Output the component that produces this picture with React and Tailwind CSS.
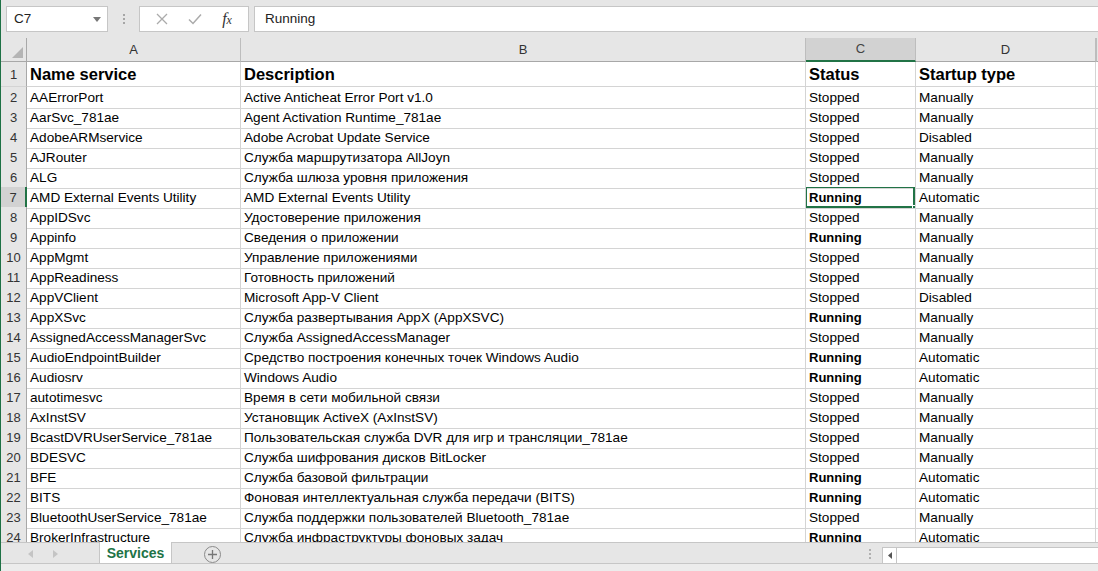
import React from 'react';

const rows = [
  ['AAErrorPort', 'Active Anticheat Error Port v1.0', 'Stopped', 'Manually'],
  ['AarSvc_781ae', 'Agent Activation Runtime_781ae', 'Stopped', 'Manually'],
  ['AdobeARMservice', 'Adobe Acrobat Update Service', 'Stopped', 'Disabled'],
  ['AJRouter', 'Служба маршрутизатора AllJoyn', 'Stopped', 'Manually'],
  ['ALG', 'Служба шлюза уровня приложения', 'Stopped', 'Manually'],
  ['AMD External Events Utility', 'AMD External Events Utility', 'Running', 'Automatic'],
  ['AppIDSvc', 'Удостоверение приложения', 'Stopped', 'Manually'],
  ['Appinfo', 'Сведения о приложении', 'Running', 'Manually'],
  ['AppMgmt', 'Управление приложениями', 'Stopped', 'Manually'],
  ['AppReadiness', 'Готовность приложений', 'Stopped', 'Manually'],
  ['AppVClient', 'Microsoft App-V Client', 'Stopped', 'Disabled'],
  ['AppXSvc', 'Служба развертывания AppX (AppXSVC)', 'Running', 'Manually'],
  ['AssignedAccessManagerSvc', 'Служба AssignedAccessManager', 'Stopped', 'Manually'],
  ['AudioEndpointBuilder', 'Средство построения конечных точек Windows Audio', 'Running', 'Automatic'],
  ['Audiosrv', 'Windows Audio', 'Running', 'Automatic'],
  ['autotimesvc', 'Время в сети мобильной связи', 'Stopped', 'Manually'],
  ['AxInstSV', 'Установщик ActiveX (AxInstSV)', 'Stopped', 'Manually'],
  ['BcastDVRUserService_781ae', 'Пользовательская служба DVR для игр и трансляции_781ae', 'Stopped', 'Manually'],
  ['BDESVC', 'Служба шифрования дисков BitLocker', 'Stopped', 'Manually'],
  ['BFE', 'Служба базовой фильтрации', 'Running', 'Automatic'],
  ['BITS', 'Фоновая интеллектуальная служба передачи (BITS)', 'Running', 'Automatic'],
  ['BluetoothUserService_781ae', 'Служба поддержки пользователей Bluetooth_781ae', 'Stopped', 'Manually'],
  ['BrokerInfrastructure', 'Служба инфраструктуры фоновых задач', 'Running', 'Automatic'],
];

const cols = 'grid grid-cols-[26px_214px_565px_110px_180px_1fr]';
const cell = 'border-r border-b border-[#d4d4d4] pl-[3px] pt-[1px] flex items-center whitespace-nowrap overflow-hidden';

function ColHeader({ label, active }) {
  return (
    <div
      className={`flex items-center justify-center border-r border-[#bdbdbd] text-[13px] ${
        active ? 'bg-[#d2d2d2] border-b-2 border-b-[#217346] text-[#444]' : 'border-b border-b-[#a8a8a8] text-[#333]'
      }`}
    >
      {label}
    </div>
  );
}

function RowNum({ n, active }) {
  return (
    <div
      className={`flex items-center justify-center pt-[1px] text-[13px] border-b border-[#d4d4d4] ${
        active ? 'bg-[#d2d2d2] border-r-2 border-r-[#217346] text-[#333]' : 'bg-[#e6e6e6] border-r border-r-[#a8a8a8] text-[#333]'
      }`}
    >
      {n}
    </div>
  );
}

export default function App() {
  return (
    <div
      className="w-[1098px] h-[571px] overflow-hidden flex flex-col bg-white border-l border-[#1e7145] text-black"
      style={{ fontFamily: '"Liberation Sans", Arial, sans-serif' }}
    >
      {/* Formula bar */}
      <div className="h-[38px] bg-[#e6e6e6] flex items-start pt-[6px] shrink-0">
        <div className="ml-[5px] w-[102px] h-[26px] bg-white border border-[#c6c6c6] flex items-center justify-between pl-[7px] pr-[6px] text-[13.5px] text-[#222]">
          <span>C7</span>
          <svg width="8" height="5" viewBox="0 0 8 5"><path d="M0 0h8L4 5z" fill="#777" /></svg>
        </div>
        <div className="w-[31px] h-[26px] flex flex-col items-center justify-center gap-[2px]">
          <span className="w-[2px] h-[2px] bg-[#a6a6a6]" />
          <span className="w-[2px] h-[2px] bg-[#a6a6a6]" />
          <span className="w-[2px] h-[2px] bg-[#a6a6a6]" />
        </div>
        <div className="w-[110px] h-[26px] bg-white border border-[#c6c6c6] flex items-center justify-around px-[6px]">
          <svg width="12" height="12" viewBox="0 0 12 12"><path d="M1 1l10 10M11 1L1 11" stroke="#ababab" strokeWidth="1.3" /></svg>
          <svg width="14" height="12" viewBox="0 0 14 12"><path d="M1 6.5l4 4L13 1.5" stroke="#ababab" strokeWidth="1.5" fill="none" /></svg>
          <span className="text-[16px] italic text-[#333] leading-none" style={{ fontFamily: '"Liberation Serif", serif' }}>
            f<span className="text-[12px]">x</span>
          </span>
        </div>
        <div className="ml-[5px] flex-1 h-[26px] bg-white border border-[#c6c6c6] border-r-0 flex items-center pl-[10px] text-[13.5px] text-[#222]">
          Running
        </div>
      </div>

      {/* Column headers */}
      <div className={`${cols} h-[24px] bg-[#e6e6e6] shrink-0`}>
        <div className="relative border-r border-b border-[#a8a8a8]">
          <svg className="absolute right-[3px] bottom-[3px]" width="11" height="11" viewBox="0 0 11 11"><path d="M11 0v11H0z" fill="#b4b4b4" /></svg>
        </div>
        <ColHeader label="A" />
        <ColHeader label="B" />
        <ColHeader label="C" active />
        <ColHeader label="D" />
        <div className="border-b border-[#a8a8a8] border-l border-l-[#bdbdbd]" />
      </div>

      {/* Grid */}
      <div className="flex-1 overflow-hidden">
        <div className={`${cols} h-[25px]`}>
          <RowNum n={1} />
          <div className={`${cell} text-[16.5px] font-bold`}>Name service</div>
          <div className={`${cell} text-[16.5px] font-bold`}>Description</div>
          <div className={`${cell} text-[16.5px] font-bold`}>Status</div>
          <div className={`${cell} text-[16.5px] font-bold`}>Startup type</div>
          <div className="border-b border-[#d4d4d4] bg-white" />
        </div>
        {rows.map((r, i) => {
          const n = i + 2;
          const sel = n === 7;
          const running = r[2] === 'Running';
          return (
            <div key={n} className={`${cols} h-[20px]`}>
              <RowNum n={n} active={sel} />
              <div className={`${cell} text-[13.6px]`}>{r[0]}</div>
              <div className={`${cell} text-[13.6px]`}>{r[1]}</div>
              <div className={`${cell} relative ${running ? 'font-bold text-[13px]' : 'text-[13.6px]'}`}>
                {r[2]}
                {sel && (
                  <>
                    <div className="absolute -left-[1px] -top-[1px] right-0 bottom-0 border-2 border-[#217346]" />
                    <div className="absolute -right-[3px] -bottom-[3px] w-[6px] h-[6px] bg-[#217346] border border-white" />
                  </>
                )}
              </div>
              <div className={`${cell} text-[13.6px]`}>{r[3]}</div>
              <div className="border-b border-[#d4d4d4]" />
            </div>
          );
        })}
      </div>

      {/* Sheet tabs */}
      <div className="h-[29px] shrink-0 bg-[#e6e6e6] border-t border-[#c6c6c6] flex items-start relative">
        <div className="flex items-center h-[22px] pl-[27px] gap-[20px]">
          <svg width="5" height="8" viewBox="0 0 5 8"><path d="M5 0v8L0 4z" fill="#c4c4c4" /></svg>
          <svg width="5" height="8" viewBox="0 0 5 8"><path d="M0 0v8l5-4z" fill="#c4c4c4" /></svg>
        </div>
        <div className="ml-[41px] -mt-[1px] w-[73px] h-[24px] bg-white border-x border-[#c6c6c6] border-b-2 border-b-[#217346] flex items-center justify-center text-[14px] font-bold text-[#217346]">
          Services
        </div>
        <div className="ml-[32px] h-[22px] flex items-center">
          <div className="w-[17px] h-[17px] rounded-full border border-[#8a8a8a] flex items-center justify-center">
            <svg width="9" height="9" viewBox="0 0 9 9"><path d="M4.5 0v9M0 4.5h9" stroke="#777" strokeWidth="1.3" /></svg>
          </div>
        </div>
        <div className="ml-auto flex items-start">
          <div className="h-[22px] w-[16px] flex flex-col items-center justify-center gap-[2px]">
            <span className="w-[2px] h-[2px] bg-[#b0b0b0]" />
            <span className="w-[2px] h-[2px] bg-[#b0b0b0]" />
            <span className="w-[2px] h-[2px] bg-[#b0b0b0]" />
          </div>
          <div className="ml-[4px] mt-[4px] w-[216px] h-[17px] bg-white border border-[#c6c6c6] border-r-0 flex">
            <div className="w-[14px] h-full border-r border-[#c6c6c6] flex items-center justify-center">
              <svg width="4" height="7" viewBox="0 0 4 7"><path d="M4 0v7L0 3.5z" fill="#555" /></svg>
            </div>
          </div>
        </div>
        <div className="absolute left-0 right-0 bottom-0 h-[8px] bg-[#ececec] border-t border-[#c6c6c6]" />
      </div>
    </div>
  );
}
